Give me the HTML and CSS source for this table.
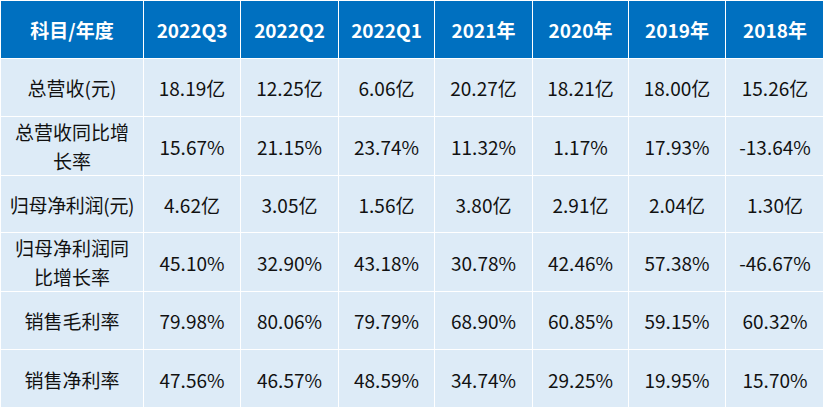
FILE: index.html
```html
<!DOCTYPE html>
<html lang="zh-CN">
<head>
<meta charset="utf-8">
<title>财务数据</title>
<link rel="stylesheet" href="styles.css">
</head>
<body>
<table class="fin">
  <colgroup>
    <col class="c0"><col class="c1"><col class="c2"><col class="c3"><col class="c4"><col class="c5"><col class="c6"><col class="c7">
  </colgroup>
  <thead>
    <tr class="r-head">
      <th>科目/年度</th><th>2022Q3</th><th>2022Q2</th><th>2022Q1</th><th>2021年</th><th>2020年</th><th>2019年</th><th>2018年</th>
    </tr>
  </thead>
  <tbody>
    <tr class="r1">
      <td class="label">总营收(元)</td><td>18.19亿</td><td>12.25亿</td><td>6.06亿</td><td>20.27亿</td><td>18.21亿</td><td>18.00亿</td><td>15.26亿</td>
    </tr>
    <tr class="r2">
      <td class="label">总营收同比增长率</td><td>15.67%</td><td>21.15%</td><td>23.74%</td><td>11.32%</td><td>1.17%</td><td>17.93%</td><td>-13.64%</td>
    </tr>
    <tr class="r3">
      <td class="label label-single">归母净利润(元)</td><td>4.62亿</td><td>3.05亿</td><td>1.56亿</td><td>3.80亿</td><td>2.91亿</td><td>2.04亿</td><td>1.30亿</td>
    </tr>
    <tr class="r4">
      <td class="label">归母净利润同比增长率</td><td>45.10%</td><td>32.90%</td><td>43.18%</td><td>30.78%</td><td>42.46%</td><td>57.38%</td><td>-46.67%</td>
    </tr>
    <tr class="r5">
      <td class="label">销售毛利率</td><td>79.98%</td><td>80.06%</td><td>79.79%</td><td>68.90%</td><td>60.85%</td><td>59.15%</td><td>60.32%</td>
    </tr>
    <tr class="r6">
      <td class="label">销售净利率</td><td>47.56%</td><td>46.57%</td><td>48.59%</td><td>34.74%</td><td>29.25%</td><td>19.95%</td><td>15.70%</td>
    </tr>
  </tbody>
</table>
</body>
</html>
```

FILE: styles.css
```css
html, body {
  margin: 0;
  padding: 0;
  background: #ffffff;
  overflow: hidden;
}

.fin {
  table-layout: fixed;
  border-collapse: separate;
  border-spacing: 1px;
  width: 824px;
  font-family: "Noto Sans CJK SC", "Noto Sans", sans-serif;
  font-size: 19px;
  color: #111111;
}

.c0 { width: 142px; }
.c1 { width: 96px; }
.c2 { width: 97px; }
.c3 { width: 95px; }
.c4 { width: 97px; }
.c5 { width: 95px; }
.c6 { width: 96px; }
.c7 { width: 98px; }

.fin th,
.fin td {
  box-sizing: border-box;
  padding: 0 2px;
  text-align: center;
  vertical-align: middle;
  line-height: 29px;
  white-space: nowrap;
}

.fin th {
  background: #0070c0;
  color: #ffffff;
  font-weight: 700;
}

.fin td {
  background: #ddebf7;
  font-weight: 400;
}

.fin td.label {
  white-space: normal;
  padding: 0 8px;
}

.fin td.label-single {
  white-space: nowrap;
  padding: 0;
  letter-spacing: -0.3px;
}

.r-head th { height: 57px; }
.r1 td { height: 57px; }
.r2 td { height: 57px; }
.r3 td { height: 56px; }
.r4 td { height: 58px; }
.r5 td { height: 57px; }
.r6 td { height: 58px; }
```
